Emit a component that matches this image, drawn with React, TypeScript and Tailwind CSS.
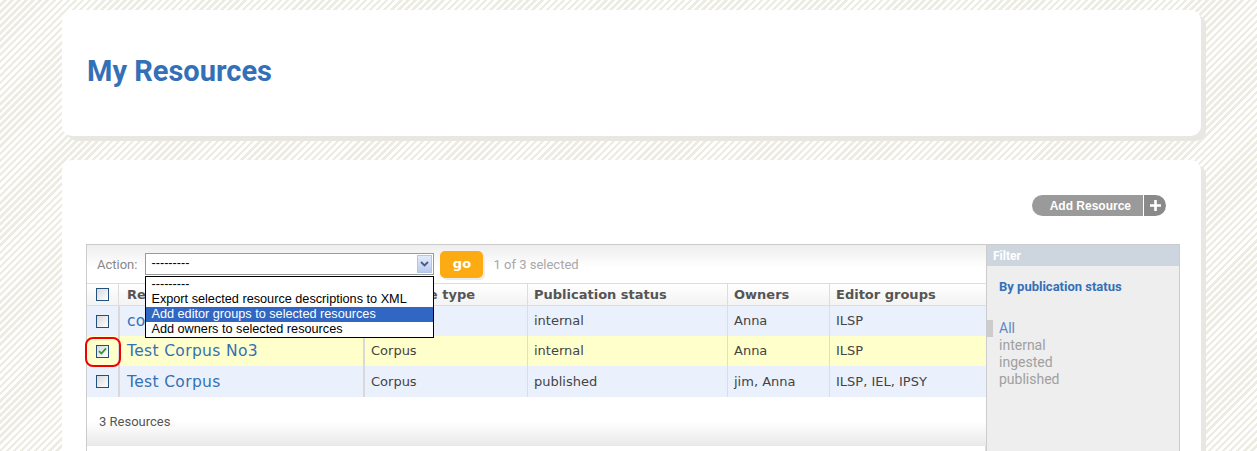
import React from "react";

type Row = {
  name: string;
  type: string;
  status: string;
  owners: string;
  groups: string;
  bg: string;
  h: string;
  checked: boolean;
};

const rows: Row[] = [
  { name: "corpus test", type: "Corpus", status: "internal", owners: "Anna", groups: "ILSP", bg: "bg-[#ebf1fc]", h: "h-[30px]", checked: false },
  { name: "Test Corpus No3", type: "Corpus", status: "internal", owners: "Anna", groups: "ILSP", bg: "bg-[#ffffcc]", h: "h-[30px]", checked: true },
  { name: "Test Corpus", type: "Corpus", status: "published", owners: "jim, Anna", groups: "ILSP, IEL, IPSY", bg: "bg-[#ebf1fc]", h: "h-[31px]", checked: false },
];

function Checkbox({ checked }: { checked: boolean }) {
  return (
    <span className="inline-flex h-[13px] w-[13px] items-center justify-center border border-[#22507f] bg-gradient-to-br from-[#d9d9d9] to-white">
      {checked && (
        <svg width="9" height="8" viewBox="0 0 9 8">
          <path d="M1 4.2 L3.4 6.5 L8 1.3" fill="none" stroke="#2e9a2e" strokeWidth="1.8" />
        </svg>
      )}
    </span>
  );
}

const dejavu = "font-['DejaVu_Sans',sans-serif]";
const roboto = "font-['Roboto',sans-serif]";

export default function App() {
  return (
    <div className="min-h-screen bg-[repeating-linear-gradient(135deg,#ffffff_0px,#ffffff_2.5px,#ecece3_2.5px,#ecece3_5px)] pl-[62px] pr-[56px] pt-[10px]">
      {/* Title card */}
      <div className="flex h-[126px] items-center rounded-[10px] bg-white pl-[25px] shadow-[5px_5px_0_0_#e8e7e1]">
        <h1 className={`${roboto} pb-[3px] text-[29px] font-bold text-[#3470b7]`}>My Resources</h1>
      </div>

      {/* Main card */}
      <div className="mt-[24px] h-[400px] rounded-[10px] bg-white pl-[24px] pr-[21px] pt-[35px] shadow-[5px_5px_0_0_#e8e7e1]">
        <div className="flex justify-end pr-[14px]">
          <div className="flex h-[21px] items-stretch font-['Liberation_Sans',sans-serif] text-[12px] font-bold text-white">
            <span className="flex items-center rounded-l-full bg-[#9a9a9a] pl-[18px] pr-[12px]">Add Resource</span>
            <span className="w-px bg-white" />
            <span className="flex w-[22px] items-center justify-center rounded-r-full bg-[#8a8a8a]">
              <svg width="13" height="13" viewBox="0 0 13 13">
                <path d="M6.5 1 V12 M1 6.5 H12" stroke="white" strokeWidth="2.6" />
              </svg>
            </span>
          </div>
        </div>

        <div className="mt-[28px] flex">
          {/* Table area */}
          <div className="w-[900px] border-l border-t border-[#cccccc]">
            {/* Action bar */}
            <div className={`${roboto} flex h-[38px] items-center bg-gradient-to-b from-[#eeeeee] to-white to-60% pl-[10px] text-[13px]`}>
              <span className="pt-[1px] text-[#888888]">Action:</span>
              <div className="relative ml-[8px] flex h-[22px] w-[289px] items-center border border-[#9a9a9a] bg-white font-['Liberation_Sans',sans-serif] text-[12.7px] text-black">
                <span className="pl-[5px]">---------</span>
                <span className="absolute right-[1px] top-[1px] flex h-[18px] w-[15px] items-center justify-center border border-[#b3c5ea] bg-gradient-to-b from-[#e3ebfb] to-[#b9cbef]">
                  <svg width="9" height="6" viewBox="0 0 9 6">
                    <path d="M1 1 L4.5 4.5 L8 1" fill="none" stroke="#4a5d80" strokeWidth="1.8" />
                  </svg>
                </span>
                <div className="absolute left-[-1px] top-[22px] z-10 w-[289px] border border-black bg-white">
                  <div className="h-[15px] pl-[5px] leading-[15px]">---------</div>
                  <div className="h-[15px] pl-[5px] leading-[15px]">Export selected resource descriptions to XML</div>
                  <div className="h-[15px] bg-[#3166c2] pl-[5px] leading-[15px] text-white">Add editor groups to selected resources</div>
                  <div className="h-[15px] pl-[5px] leading-[15px]">Add owners to selected resources</div>
                </div>
              </div>
              <button className={`${dejavu} ml-[6px] h-[27px] w-[43px] rounded-[5px] bg-[#fcab12] text-[13px] font-bold text-white shadow-[2px_2px_0_0_#ececec]`}>
                go
              </button>
              <span className="ml-[10px] pt-[1px] text-[#a8a8a8]">1 of 3 selected</span>
            </div>

            {/* Header */}
            <div className={`${dejavu} grid h-[23px] grid-cols-[31px_245px_164px_200px_102px_158px] border-y border-[#dddddd] bg-gradient-to-b from-white to-[#f3f3f3] text-[13px] font-bold text-[#555555]`}>
              <div className="flex items-center justify-center">
                <Checkbox checked={false} />
              </div>
              <div className="flex items-center border-l border-[#dddddd] pl-[8px]">Resource name</div>
              <div className="flex items-center border-l border-[#dddddd] pl-[6px]">Resource type</div>
              <div className="flex items-center border-l border-[#dddddd] pl-[6px]">Publication status</div>
              <div className="flex items-center border-l border-[#dddddd] pl-[6px]">Owners</div>
              <div className="flex items-center border-l border-[#dddddd] pl-[6px]">Editor groups</div>
            </div>

            {/* Rows */}
            {rows.map((r) => (
              <div
                key={r.name}
                className={`${dejavu} grid ${r.h} ${r.bg} grid-cols-[31px_245px_164px_200px_102px_158px] text-[13px] text-[#444444]`}
              >
                <div className="relative flex items-center justify-center">
                  <Checkbox checked={r.checked} />
                  {r.checked && (
                    <span className="absolute left-[-2px] top-[1px] h-[30px] w-[36px] rounded-[8px] border-[2.5px] border-[#f00000]" />
                  )}
                </div>
                <div className="flex items-center border-l-2 border-[#d9d9d9] pl-[7px] pt-[2px] text-[15.5px] tracking-[0.35px] text-[#3470b5]">{r.name}</div>
                <div className="flex items-center border-l-2 border-[#d9d9d9] pl-[6px]">{r.type}</div>
                <div className="flex items-center border-l border-[#dddddd] pl-[6px]">{r.status}</div>
                <div className="flex items-center border-l border-[#dddddd] pl-[6px]">{r.owners}</div>
                <div className="flex items-center border-l border-[#dddddd] pl-[6px]">{r.groups}</div>
              </div>
            ))}

            {/* Footer */}
            <div className={`${roboto} flex h-[49px] items-center bg-gradient-to-b from-white from-50% to-[#e9e9e9] pl-[12px] text-[13px] text-[#555555]`}>
              3 Resources
            </div>
            <div className="h-[30px] border-r border-[#dddddd] bg-white" />
          </div>

          {/* Filter */}
          <div className={`${roboto} w-[194px] border border-[#cccccc] bg-[#eeeeee]`}>
            <div className="flex h-[21px] items-center bg-[#cdd6df] pl-[6px] text-[12px] font-bold text-white">Filter</div>
            <div className="pl-[12px] pt-[11px] text-[13px] font-bold text-[#3470b7]">By publication status</div>
            <div className="relative mt-[23px] pl-[12px] text-[14px] leading-[17px] text-[#a0a0a0]">
              <span className="absolute left-0 top-0 h-[17px] w-[6px] bg-[#cccccc]" />
              <div className="text-[#5b88c8]">All</div>
              <div>internal</div>
              <div>ingested</div>
              <div>published</div>
            </div>
          </div>
        </div>
      </div>
    </div>
  );
}
